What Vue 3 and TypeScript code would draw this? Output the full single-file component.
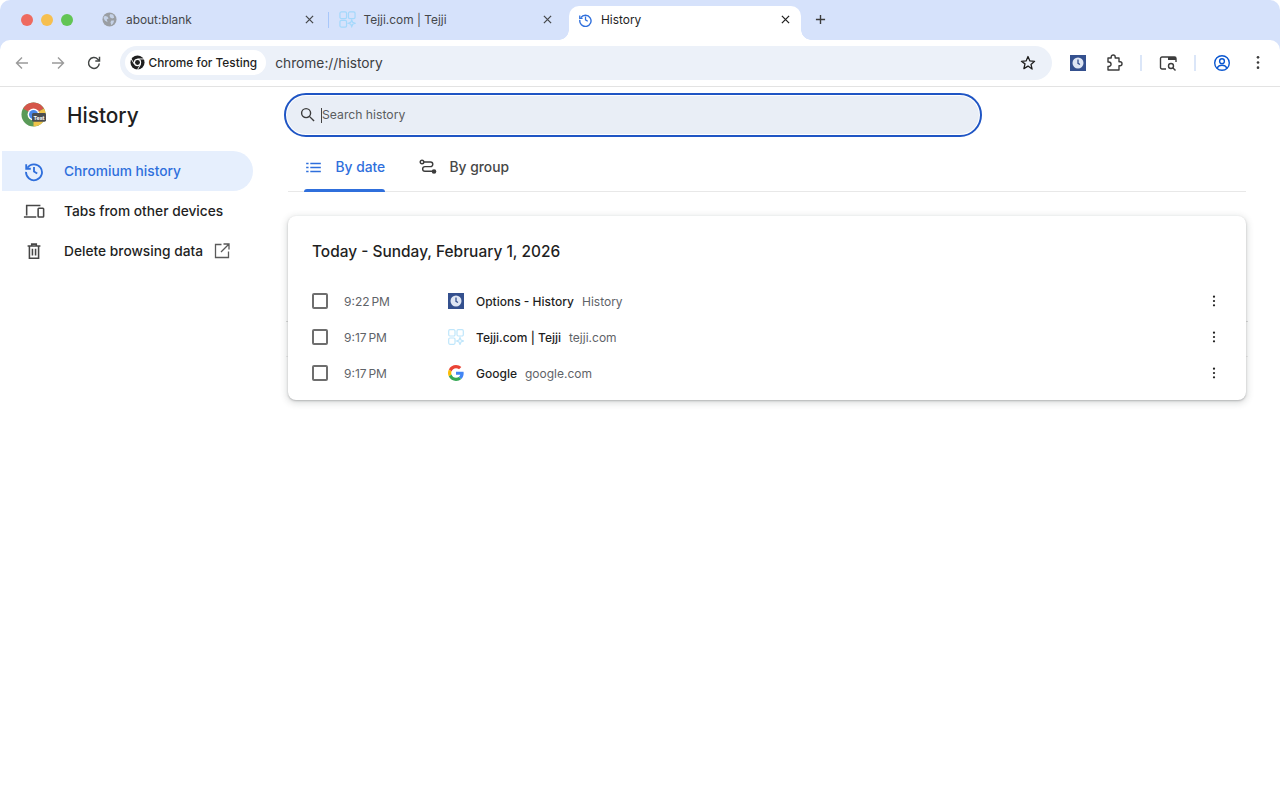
<script setup lang="ts">
interface Row { time: string; title: string; domain: string; icon: string }
const rows: Row[] = [
  { time: '9:22 PM', title: 'Options - History', domain: 'History', icon: 'clock' },
  { time: '9:17 PM', title: 'Tejji.com | Tejji', domain: 'tejji.com', icon: 'tejji' },
  { time: '9:17 PM', title: 'Google', domain: 'google.com', icon: 'google' },
]
</script>

<template>
  <div class="window">
    <div class="strip">
      <div class="lights">
        <span class="light red"></span><span class="light yellow"></span><span class="light green"></span>
      </div>
      <div class="tab t1">
        <svg class="fav" viewBox="0 0 16 16"><circle cx="8" cy="8" r="7.5" fill="#9a9ea3"/><path d="M3 4l3 1 1 2-2 1 1 3-3-2-1.500-3zM9 2l3 1 1 3-2 1-2-1-1-2zM10 9l3 0-1 3-2 2-1-3z" fill="#d3e3fd" opacity=".75"/></svg>
        <span class="tab-label">about:blank</span>
        <svg class="x" viewBox="0 0 10 10"><path d="M1 1l8 8M9 1l-8 8" /></svg>
      </div>
      <span class="tab-sep"></span>
      <div class="tab t2">
        <svg class="fav wide" viewBox="0 0 18 18" fill="none" stroke="#a4d8fb" stroke-width="1.300"><rect x="1" y="1" width="7" height="7" rx="1.500"/><rect x="10" y="1" width="7" height="7" rx="1.500"/><rect x="1" y="10" width="7" height="7" rx="1.500"/><path d="M13.500 9.500l1 2.500 2.500 1-2.500 1-1 2.500-1-2.500-2.500-1 2.500-1z"/></svg>
        <span class="tab-label">Tejji.com | Tejji</span>
        <svg class="x" viewBox="0 0 10 10"><path d="M1 1l8 8M9 1l-8 8" /></svg>
      </div>
      <div class="tab active">
        <svg class="fav" viewBox="0 0 24 24" fill="none" stroke="#2f6fdc" stroke-width="2.200"><path d="M4.500 9A9 9 0 1 1 3 12.500"/><path d="M2.800 5.500V10H7.300" stroke-width="2"/><path d="M12 7v5.500l3.500 2.200" stroke-width="2"/></svg>
        <span class="tab-label dark">History</span>
        <svg class="x darkx" viewBox="0 0 10 10"><path d="M1 1l8 8M9 1l-8 8" /></svg>
      </div>
      <svg class="plus" viewBox="0 0 12 12"><path d="M6 1v10M1 6h10"/></svg>
    </div>

    <div class="toolbar">
      <svg class="nav" viewBox="0 0 16 16" fill="none" stroke="#9a9a9a" stroke-width="1.400"><path d="M14 8H2.500M8 2.500L2.500 8 8 13.500"/></svg>
      <svg class="nav" viewBox="0 0 16 16" fill="none" stroke="#9a9a9a" stroke-width="1.400"><path d="M2 8h11.500M8 2.500L13.500 8 8 13.500"/></svg>
      <svg class="nav" viewBox="0 0 16 16" fill="none" stroke="#444746" stroke-width="1.500"><path d="M13.300 8.500A5.400 5.400 0 1 1 11.800 4.200L13.500 5.800"/><path d="M13.500 1.800v4.200H9.300" /></svg>
      <div class="omnibox">
        <div class="chip">
          <svg class="chrome" viewBox="0 0 16 16">
            <circle cx="8" cy="8" r="7.500" fill="#1f1f1f"/>
            <circle cx="8" cy="8" r="3.900" fill="#fff"/>
            <circle cx="8" cy="8" r="2.600" fill="#1f1f1f"/>
            <path d="M8 4.200h7M4.700 9.900L1.300 4.200M11.300 9.900L8 15.600" stroke="#fff" stroke-width="1"/>
          </svg>
          <span>Chrome for Testing</span>
        </div>
        <span class="url">chrome://history</span>
        <svg class="star" viewBox="0 0 16 16" fill="none" stroke="#1f1f1f" stroke-width="1.300" stroke-linejoin="round"><path d="M8 1.500l1.900 4.400 4.700.4-3.600 3.100 1.100 4.700L8 11.100l-4.100 2.500L5 8.900 1.400 6.300l4.700-.4z"/></svg>
      </div>
      <div class="actions">
        <svg class="ext-clock" viewBox="0 0 16 16"><rect width="16" height="16" fill="#34508e"/><circle cx="8" cy="8" r="5.500" fill="#dfe6f3"/><path d="M8 4.500V8.300l2 1.200" fill="none" stroke="#34508e" stroke-width="1.300"/></svg>
        <svg class="ic puzzle" viewBox="0 0 18 18" fill="none" stroke="#3c3c3c" stroke-width="1.400" stroke-linejoin="round"><path d="M3 4h3.200V3a2 2 0 0 1 4 0v1H14v3.700h1a2 2 0 0 1 0 4h-1V16H3v-3.500h.8a2.200 2.200 0 0 0 0-4.500H3z"/></svg>
        <span class="sep s1"></span>
        <svg class="ic lens" viewBox="0 0 18 18" fill="none" stroke="#3c3c3c" stroke-width="1.400"><path d="M7 15H3a1.500 1.500 0 0 1-1.500-1.500V4.500A1.500 1.500 0 0 1 3 3h12.500A1.500 1.500 0 0 1 17 4.500V8"/><path d="M9 3h8v3H9z" fill="#3c3c3c" stroke="none"/><circle cx="12" cy="12" r="2.500"/><path d="M14 14l2.500 2.500"/></svg>
        <span class="sep s2"></span>
        <svg class="ic profile" viewBox="0 0 18 18" fill="none" stroke="#0b57d0" stroke-width="1.400"><circle cx="9" cy="9" r="7.300"/><circle cx="9" cy="7.200" r="2.400"/><path d="M4.200 14c1-2 3-2.800 4.800-2.800s3.800.8 4.800 2.800"/></svg>
        <svg class="ic kebab" viewBox="0 0 4 16" fill="#3c3c3c"><circle cx="2" cy="2.500" r="1.400"/><circle cx="2" cy="8" r="1.400"/><circle cx="2" cy="13.500" r="1.400"/></svg>
      </div>
    </div>

    <div class="page">
      <aside class="side">
        <header class="brand">
          <svg class="logo" viewBox="0 0 26 26">
            <circle cx="13" cy="13" r="12.500" fill="#5a9a58"/>
            <path d="M13 .5A12.500 12.500 0 0 1 23.800 6.800L13 13 2.200 6.800A12.500 12.500 0 0 1 13 .5z" fill="#d5564a"/>
            <path d="M24 6.800A12.500 12.500 0 0 1 13 25.500L13 13z" fill="#eec34a"/>
            <circle cx="13" cy="13" r="6.200" fill="#fff"/>
            <circle cx="13" cy="13" r="4.700" fill="#4a86e8"/>
            <rect x="11.500" y="11.500" width="14.500" height="9" rx="1.500" fill="#4a4d50"/>
            <text x="18.700" y="18.500" class="logo-text">Test</text>
          </svg>
          <h1>History</h1>
        </header>
        <nav class="menu">
          <a class="item on">
            <svg class="mi" viewBox="0 0 24 24" fill="none" stroke="#2f6fdc" stroke-width="2"><path d="M4.800 8.500A8.700 8.700 0 1 1 3.300 13"/><path d="M3.500 4.500V9.500H8.500"/><path d="M12 7.500v5l3.500 2.200"/></svg>
            <span>Chromium history</span>
          </a>
          <a class="item">
            <svg class="mi" viewBox="0 0 24 24" fill="none" stroke="#474747" stroke-width="1.700"><path d="M4 17V6h15M1 18.500h13.500"/><rect x="16.500" y="9" width="6" height="9.500" rx=".8"/></svg>
            <span>Tabs from other devices</span>
          </a>
          <a class="item">
            <svg class="mi" viewBox="0 0 24 24" fill="none" stroke="#474747" stroke-width="1.700"><path d="M5 6.500h14M9.500 6V4.500h5V6M7 6.500V20h10V6.500M10.300 9.500v7.500M13.700 9.500v7.500"/></svg>
            <span>Delete browsing data</span>
            <svg class="open" viewBox="0 0 16 16" fill="none" stroke="#5a5a5a" stroke-width="1.300"><path d="M7.500 1.500H1.500v13h13V8.500M9.500 1h5.500v5.500M15 1L7 9"/></svg>
          </a>
        </nav>
      </aside>

      <main class="content">
        <div class="search">
          <svg class="s-ic" viewBox="0 0 16 16" fill="none" stroke="#3c3c3c" stroke-width="1.500"><circle cx="6.500" cy="6.500" r="4.800"/><path d="M10 10l5 5"/></svg>
          <span class="caret"></span>
          <span class="s-text">Search history</span>
        </div>
        <div class="tabs">
          <div class="pill on">
            <svg class="list" viewBox="0 0 16 12" fill="#2f6fdc"><path d="M4.500.8H16v1.700H4.500zM4.500 5.200H16v1.700H4.500zM4.500 9.600H16v1.700H4.500zM0 .8h2.600v1.700H0zM0 5.200h2.600v1.700H0zM0 9.600h2.600v1.700H0z"/></svg>
            <span>By date</span>
            <i class="ink"></i>
          </div>
          <div class="pill group">
            <svg class="route" viewBox="0 0 18 16" fill="none" stroke="#3c3c3c" stroke-width="1.400"><circle cx="3" cy="3" r="1.800"/><path d="M5 3h6.500a2.200 2.200 0 0 1 0 4.600H6a2.200 2.200 0 0 0 0 4.700h7"/><circle cx="15" cy="12.500" r="2.300" fill="#3c3c3c" stroke="none"/></svg>
            <span>By group</span>
          </div>
        </div>
        <section class="stack">
          <div class="ghost"></div>
          <div class="card">
            <h2>Today - Sunday, February 1, 2026</h2>
            <div v-for="r in rows" :key="r.title" class="row">
              <span class="check"></span>
              <span class="time">{{ r.time }}</span>
              <span class="fi">
                <svg v-if="r.icon === 'clock'" viewBox="0 0 16 16"><rect width="16" height="16" fill="#34508e"/><circle cx="8" cy="8" r="5.500" fill="#dfe6f3"/><path d="M8 4.500V8.300l2 1.200" fill="none" stroke="#34508e" stroke-width="1.300"/></svg>
                <svg v-else-if="r.icon === 'tejji'" viewBox="0 0 16 16" fill="none" stroke="#bfe6fb" stroke-width="1.200"><rect x=".7" y=".7" width="6.300" height="6.300" rx="1.200"/><rect x="9" y=".7" width="6.300" height="6.300" rx="1.200"/><rect x=".7" y="9" width="6.300" height="6.300" rx="1.200"/><path d="M12 8.500l1 2.500 2.500 1-2.500 1-1 2.500-1-2.500-2.500-1 2.500-1z"/></svg>
                <svg v-else viewBox="0 0 48 48"><path fill="#EA4335" d="M24 9.500c3.500 0 6.700 1.200 9.200 3.600l6.800-6.800C35.900 2.400 30.500 0 24 0 14.600 0 6.500 5.400 2.600 13.200l8 6.200C12.400 13.700 17.700 9.500 24 9.500z"/><path fill="#4285F4" d="M47 24.500c0-1.600-.2-3.100-.4-4.500H24v9h12.900c-.6 3-2.300 5.500-4.800 7.200l7.700 6C44.300 38 47 31.800 47 24.500z"/><path fill="#FBBC05" d="M10.500 28.600c-.5-1.500-.8-3-.8-4.600s.3-3.200.8-4.600l-8-6.200C.9 16.500 0 20.100 0 24s.9 7.500 2.600 10.800z"/><path fill="#34A853" d="M24 48c6.500 0 11.900-2.100 15.900-5.800l-7.700-6c-2.200 1.400-4.900 2.300-8.200 2.300-6.300 0-11.600-4.200-13.500-10L2.500 34.800C6.500 42.600 14.600 48 24 48z"/></svg>
              </span>
              <span class="title">{{ r.title }}</span>
              <span class="domain">{{ r.domain }}</span>
              <svg class="more" viewBox="0 0 4 14" fill="#1f1f1f"><circle cx="2" cy="2" r="1.300"/><circle cx="2" cy="7" r="1.300"/><circle cx="2" cy="12" r="1.300"/></svg>
            </div>
          </div>
        </section>
      </main>
    </div>
  </div>
</template>

<style>
html, body { margin: 0; background: #fff; }
</style>

<style scoped>
.window {
  width: 1280px; height: 800px; overflow: hidden; display: flex; flex-direction: column;
  font-family: Inter, "Liberation Sans", sans-serif; color: #1f1f1f;
  background: linear-gradient(#d6e2fb 50px, #fff 50px); border-radius: 10px 10px 0 0;
}
.strip { height: 40px; flex: none; display: flex; align-items: flex-end; }
.lights { display: flex; gap: 8px; padding: 0 0 14px 21px; flex: none; width: 52px; }
.light { width: 12px; height: 12px; border-radius: 50%; flex: none; }
.red { background: #ee6a5f; } .yellow { background: #f6bf4f; } .green { background: #62c554; }
.tab { height: 34px; flex: none; display: flex; align-items: center; box-sizing: border-box; padding: 0 10px 7px; font-size: 11.900px; color: #45474a; }
.t1 { margin-left: 19px; width: 233px; }
.t2 { padding-left: 9.500px; width: 233.500px; }
.active { position: relative; width: 232px; background: #fff; border-radius: 10px 10px 0 0; margin-left: 6.500px; padding-left: 8.500px; }
.active::before, .active::after { content: ""; position: absolute; bottom: 0; width: 10px; height: 10px; }
.active::before { left: -10px; background: radial-gradient(circle at 0 0, transparent 9.500px, #fff 10px); }
.active::after { right: -10px; background: radial-gradient(circle at 100% 0, transparent 9.500px, #fff 10px); }
.fav { width: 15px; height: 15px; flex: none; margin-right: 9px; }
.fav.wide { width: 17px; height: 17px; margin-right: 8px; }
.active .fav { margin-right: 8.500px; }
.tab-label { flex: 1; white-space: nowrap; }
.tab-label.dark { color: #1f1f1f; }
.x { width: 9px; height: 9px; flex: none; fill: none; stroke: #45474a; stroke-width: 1.400; margin-right: 1px; }
.darkx { stroke: #1f1f1f; }
.tab-sep { width: 1.500px; height: 16px; background: #a8c7fa; margin: 0 0 12px 2.500px; flex: none; }
.plus { width: 11px; height: 11px; fill: none; stroke: #3c3c3c; stroke-width: 1.500; margin: 0 0 15px 14px; flex: none; }

.toolbar { height: 47px; flex: none; box-sizing: border-box; display: flex; align-items: center; background: #fff; border-radius: 10px 10px 0 0; border-bottom: 1px solid #e3e3e3; padding: 0 0 1px 14px; }
.nav { width: 16px; height: 16px; flex: none; margin-right: 20px; }
.omnibox { width: 932px; margin-left: -2px; flex: none; height: 34px; box-sizing: border-box; background: #ecf1f9; border-radius: 17px; display: flex; align-items: center; padding: 0 16px 0 5px; }
.chip { height: 25px; border-radius: 13px; background: #fff; display: flex; align-items: center; padding: 0 9px 0 4.500px; font-size: 11.850px; font-weight: 500; color: #1f1f1f; white-space: nowrap; }
.chrome { width: 15px; height: 15px; margin-right: 4px; }
.url { font-size: 13.750px; color: #3c4043; margin-left: 9px; flex: 1; }
.star { width: 16px; height: 16px; flex: none; }
.actions { display: flex; align-items: center; flex: 1; height: 100%; padding-left: 18px; }
.ext-clock { width: 16px; height: 16px; flex: none; }
.ic { flex: none; width: 18px; height: 18px; }
.puzzle { margin-left: 19px; }
.sep { width: 2px; height: 16px; background: #dbe6f8; flex: none; }
.s1 { margin-left: 17px; }
.lens { margin-left: 17px; }
.s2 { margin-left: 17px; }
.profile { margin-left: 17px; }
.kebab { width: 4px; height: 15px; margin-left: 25px; }

.page { flex: 1; display: flex; background: #fff; min-height: 0; }
.side { width: 284px; flex: none; box-sizing: border-box; padding-left: 2px; }
.brand { height: 64px; box-sizing: border-box; padding: 0 0 8px 19px; display: flex; align-items: center; }
.logo { width: 25px; height: 25px; flex: none; margin-top: -1px; }
h1 { font-size: 20.800px; font-weight: 500; margin: 2px 0 0 21px; color: #1f1f1f; line-height: 1; }
.logo-text { font: 700 5.500px Inter, sans-serif; fill: #fff; text-anchor: middle; }
.menu { display: flex; flex-direction: column; }
.item { height: 40px; width: 251px; display: flex; align-items: center; box-sizing: border-box; padding: 0 0 1px 22px; font-size: 13.750px; font-weight: 500; color: #1f1f1f; border-radius: 0 20px 20px 0; }
.item.on { background: #e6effd; color: #2f6fdc; }
.mi { width: 22px; height: 22px; flex: none; margin-right: 19px; margin-left: -1px; }
.open { width: 16px; height: 16px; margin-left: 11px; }

.content { flex: 1; min-width: 0; }
.search { width: 698px; height: 44px; box-sizing: border-box; margin-top: 6px; border: 2px solid #1f55c4; border-radius: 22px; background: #e9eef6; box-shadow: inset 0 0 0 1px #fff; display: flex; align-items: center; padding-left: 14px; position: relative; }
.s-ic { width: 15px; height: 15px; flex: none; margin-top: -1px; }
.caret { width: 1px; height: 15px; background: #444; margin-left: 6px; flex: none; }
.s-text { font-size: 12.200px; color: #5a5d60; padding-bottom: 1px; }
.tabs { margin: 10px 34px 0 4px; height: 45px; box-sizing: border-box; border-bottom: 1px solid #e8e8e8; display: flex; }
.pill { position: relative; height: 44px; display: flex; align-items: center; font-size: 13.800px; font-weight: 500; padding-bottom: 4px; box-sizing: border-box; white-space: nowrap; }
.pill.on { margin-left: 15.500px; width: 81px; color: #2f6fdc; padding-left: 2px; }
.list { width: 15px; height: 11px; margin-right: 15px; flex: none; }
.group { margin-left: 34px; color: #474747; }
.route { width: 18px; height: 16px; margin-right: 13px; flex: none; }
.ink { position: absolute; left: 0; right: 0; bottom: -1px; height: 3px; background: #2f6fdc; border-radius: 3px 3px 0 0; }

.stack { position: relative; margin: 24px 34px 0 4px; }
.ghost { position: absolute; left: -2px; right: -2px; top: 105px; height: 34px; border-top: 1px solid #dcdcdc; border-bottom: 1px solid #eee; }
.card { position: relative; height: 184px; box-sizing: border-box; background: #fff; border-radius: 8px; box-shadow: 0 1px 2px rgba(60,64,67,.3), 0 2px 6px 2px rgba(60,64,67,.15); padding-top: 25px; }
h2 { font-size: 15.450px; font-weight: 500; margin: 0 0 20px 24px; line-height: 22px; color: #1f1f1f; }
.row { height: 36px; display: flex; align-items: center; font-size: 12px; padding-left: 24px; }
.check { width: 12px; height: 12px; border: 2px solid #6e6e6e; border-radius: 2px; flex: none; }
.time { width: 104px; margin-left: 16px; color: #5f6368; flex: none; word-spacing: -1.500px; }
.fi { width: 16px; height: 16px; flex: none; margin-right: 12px; display: block; }
.fi svg { width: 16px; height: 16px; display: block; }
.title { font-weight: 500; font-size: 12px; color: #1f1f1f; margin-right: 8px; white-space: nowrap; }
.domain { color: #5f6368; flex: 1; white-space: nowrap; }
.more { width: 4px; height: 12px; flex: none; margin-right: 30px; }
</style>
